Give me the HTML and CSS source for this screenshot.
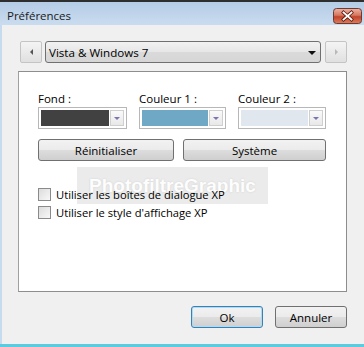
FILE: index.html
```html
<!DOCTYPE html>
<html lang="fr">
<head>
  <meta charset="UTF-8">
  <title>Préférences</title>
  <link rel="stylesheet" href="styles.css">
</head>
<body>
  <div class="window">
    <div class="titlebar">
      <span class="title">Préférences</span>
      <svg class="caption-btn" width="29" height="16" viewBox="0 0 29 16">
        <defs>
          <linearGradient id="red" x1="0" y1="0" x2="0" y2="1">
            <stop offset="0" stop-color="#eeb4a6"/>
            <stop offset="0.45" stop-color="#d6785f"/>
            <stop offset="0.55" stop-color="#c1442b"/>
            <stop offset="1" stop-color="#dc7e60"/>
          </linearGradient>
        </defs>
        <rect x="0.5" y="0.5" width="28" height="15" rx="3" fill="url(#red)" stroke="#6b3a33"/>
        <path d="M10.5 4.5 L18.5 11.5 M18.5 4.5 L10.5 11.5" stroke="#5a1a10" stroke-width="3.4" stroke-linecap="square"/>
        <path d="M10.5 4.5 L18.5 11.5 M18.5 4.5 L10.5 11.5" stroke="#fff" stroke-width="1.8" stroke-linecap="square"/>
      </svg>
    </div>

    <div class="content">
      <div class="toolbar">
        <button class="nav"><span class="tri-left"></span></button>
        <div class="combo">
          <span>Vista &amp; Windows 7</span>
          <span class="combo-arrow"></span>
        </div>
        <button class="nav"><span class="tri-right"></span></button>
      </div>

      <div class="panel">
        <div class="colors">
          <div class="color-field">
            <label>Fond :</label>
            <div class="color-combo">
              <span class="swatch swatch-dark"></span>
              <span class="drop"><i></i></span>
            </div>
          </div>
          <div class="color-field">
            <label>Couleur 1 :</label>
            <div class="color-combo">
              <span class="swatch swatch-blue"></span>
              <span class="drop"><i></i></span>
            </div>
          </div>
          <div class="color-field">
            <label>Couleur 2 :</label>
            <div class="color-combo">
              <span class="swatch swatch-light"></span>
              <span class="drop"><i></i></span>
            </div>
          </div>
        </div>

        <div class="actions">
          <button class="btn">Réinitialiser</button>
          <button class="btn">Système</button>
        </div>

        <div class="options">
          <div class="watermark"><span>PhotofiltreGraphic</span></div>
          <label class="check"><span class="box"></span>Utiliser les boîtes de dialogue XP</label>
          <label class="check"><span class="box"></span>Utiliser le style d'affichage XP</label>
        </div>
      </div>

      <div class="footer">
        <button class="btn btn-default">Ok</button>
        <button class="btn">Annuler</button>
      </div>
    </div>
  </div>
</body>
</html>
```

FILE: styles.css
```css
body {
  margin: 0;
  font-family: "Open Sans", "Noto Sans", sans-serif;
  font-size: 11px;
  color: #000;
  background: #3a3a3a;
}
.window {
  width: 364px;
  height: 347px;
  display: flex;
  flex-direction: column;
  background: #f0f0f0;
  border-top: 2px solid #2e2e2e;
  box-sizing: border-box;
  border-bottom: 3px solid #5ccbe0;
}
.titlebar {
  flex: none;
  height: 23px;
  background: linear-gradient(#b4cce6, #cadcef);
  display: flex;
  align-items: flex-start;
  padding: 0 2px 0 7px;
}
.title {
  font-size: 11.5px;
  line-height: 14px;
  color: #1a1a1a;
  margin-top: 7px;
}
.caption-btn {
  flex: none;
  display: block;
  margin: 6px 0 0 auto;
}
.content {
  flex: 1;
  padding: 0 17px 0 16px;
  border-left: 2px solid #c7dbee;
  display: flex;
  flex-direction: column;
}
.toolbar {
  display: flex;
  gap: 3px;
  padding-left: 2px;
  margin-top: 16px;
  height: 22px;
}
.nav {
  width: 22px;
  height: 22px;
  padding: 0;
  border: 1px solid #c4c4c4;
  border-radius: 2px;
  background: linear-gradient(#f4f4f4, #e0e0e0);
  display: flex;
  align-items: center;
  justify-content: center;
}
.nav:last-child { margin-left: 1px; }
.tri-left {
  border-right: 3px solid #555;
  border-top: 3px solid transparent;
  border-bottom: 3px solid transparent;
}
.tri-right {
  border-left: 3px solid #b8b8b8;
  border-top: 3px solid transparent;
  border-bottom: 3px solid transparent;
}
.combo {
  flex: 1;
  display: flex;
  align-items: center;
  justify-content: space-between;
  padding: 0 4px 0 3px;
  border: 1px solid #707070;
  border-radius: 3px;
  background: linear-gradient(#f2f2f2, #e6e6e6 50%, #dadada 51%, #d6d6d6);
  font-size: 11.6px;
}
.combo-arrow {
  border-top: 4px solid #111;
  border-left: 4px solid transparent;
  border-right: 4px solid transparent;
  margin-top: 2px;
}
.panel {
  margin-top: 8px;
  height: 221px;
  box-sizing: border-box;
  border: 1px solid #8e8e8e;
  border-left-color: #a0a0a0;
  background: #fff;
  padding: 19px 19px 0 19px;
}
.colors {
  display: grid;
  grid-template-columns: 89px 87px 88px;
  column-gap: 12px;
}
.color-field label {
  display: block;
  line-height: 15px;
  margin-bottom: 1px;
  font-size: 11.5px;
}
.color-combo {
  display: flex;
  height: 22px;
  box-sizing: border-box;
  border: 1px solid #b7b7b7;
  padding: 2px;
  gap: 1px;
}
.swatch { flex: 1; }
.swatch-dark { background: #414141; }
.swatch-blue { background: #6ea8c4; }
.swatch-light { background: #e1e7ee; }
.drop {
  width: 12px;
  border: 1px solid #cfcfcf;
  background: linear-gradient(#fafafa, #e8e8e8);
  display: flex;
  align-items: center;
  justify-content: center;
}
.drop i {
  border-top: 3px solid #7a74b0;
  border-left: 3px solid transparent;
  border-right: 3px solid transparent;
}
.actions {
  display: grid;
  grid-template-columns: 136px 143px;
  column-gap: 9px;
  margin-top: 10px;
}
.btn {
  height: 22px;
  padding: 0;
  font-family: inherit;
  font-size: 11.5px;
  border: 1px solid #707070;
  border-radius: 3px;
  background: linear-gradient(#f2f2f2, #ebebeb 50%, #dddddd 51%, #cfcfcf);
  color: #000;
}
.options {
  position: relative;
  margin-top: 24px;
}
.check {
  display: flex;
  align-items: center;
  height: 18px;
  position: relative;
  font-size: 11.2px;
}
.box {
  width: 11px;
  height: 11px;
  border: 1px solid #8a8a8a;
  background: linear-gradient(135deg, #dcdcdc, #f8f8f8);
  margin-right: 5px;
}
.watermark {
  position: absolute;
  left: 39px;
  top: -18px;
  width: 191px;
  height: 37px;
  display: flex;
  align-items: center;
  justify-content: center;
  background: #ebebeb;
  color: #fdfdfd;
  font-family: "Liberation Sans", sans-serif;
  font-weight: bold;
  font-size: 19px;
  text-shadow: 0 0 2px #cfcfcf;
}
.footer {
  display: flex;
  justify-content: flex-end;
  gap: 12px;
  margin-top: 14px;
}
.footer .btn { width: 72px; }
.btn-default {
  border-color: #3c7fb1;
  box-shadow: inset 0 0 0 1px #a9dcf6;
}
```
